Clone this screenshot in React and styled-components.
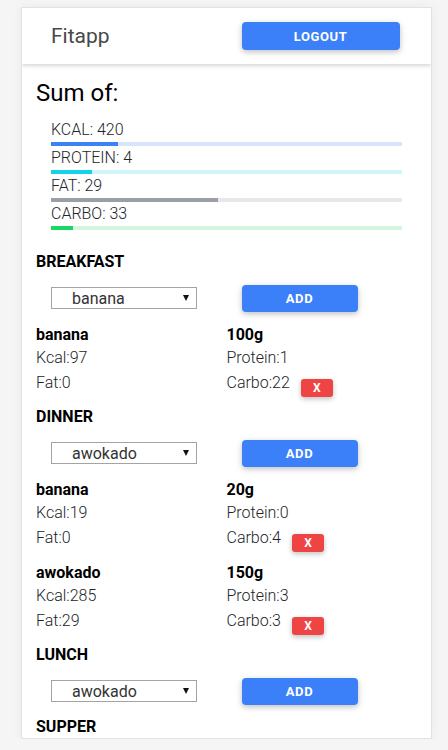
import React from "react";
import styled, { createGlobalStyle } from "styled-components";

const GlobalStyle = createGlobalStyle`
  body {
    margin: 0;
    background-color: #f5f5f5;
    font-family: Roboto, "Noto Sans", Arial, sans-serif;
  }
`;

const totals = [
  { label: "KCAL: 420", value: 19, fill: "#3b82f6", track: "#d7e6fd" },
  { label: "PROTEIN: 4", value: 11.8, fill: "#12d3ea", track: "#cff6fb" },
  { label: "FAT: 29", value: 47.6, fill: "#9a9ea6", track: "#e8e8e8" },
  { label: "CARBO: 33", value: 6.3, fill: "#17d862", track: "#d2f7de" },
];

const meals = [
  {
    name: "BREAKFAST",
    selected: "banana",
    items: [{ name: "banana", weight: "100g", kcal: 97, protein: 1, fat: 0, carbo: 22 }],
  },
  {
    name: "DINNER",
    selected: "awokado",
    items: [
      { name: "banana", weight: "20g", kcal: 19, protein: 0, fat: 0, carbo: 4 },
      { name: "awokado", weight: "150g", kcal: 285, protein: 3, fat: 29, carbo: 3 },
    ],
  },
  { name: "LUNCH", selected: "awokado", items: [] },
  { name: "SUPPER", selected: "awokado", items: [], hidden: true },
];

const App = () => {
  return (
    <>
      <GlobalStyle />
      <Card>
        <Header>
          <Brand>Fitapp</Brand>
          <HeaderCol>
            <BlueButton $width="158px" $height="28px">Logout</BlueButton>
          </HeaderCol>
        </Header>

        <Content>
          <SumTitle>Sum of:</SumTitle>
          <Totals>
            {totals.map((t) => (
              <div key={t.label}>
                <TotalLabel>{t.label}</TotalLabel>
                <Track $color={t.track}>
                  <Fill $color={t.fill} style={{ width: `${t.value}%` }} />
                </Track>
              </div>
            ))}
          </Totals>

          {meals.map((meal, i) => (
            <Meal key={meal.name}>
              <MealTitle $first={i === 0}>{meal.name}</MealTitle>
              {!meal.hidden && (
                <>
                  <AddRow>
                    <Cell>
                      <SelectWrap>
                        <Select defaultValue={meal.selected}>
                          <option value="banana">banana</option>
                          <option value="awokado">awokado</option>
                        </Select>
                      </SelectWrap>
                    </Cell>
                    <Cell>
                      <BlueButton $width="116px" $height="27px">Add</BlueButton>
                    </Cell>
                  </AddRow>
                  {meal.items.map((item) => (
                    <Item key={item.name + item.weight}>
                      <ItemTitle>{item.name}</ItemTitle>
                      <ItemTitle>{item.weight}</ItemTitle>
                      <ItemText>Kcal:{item.kcal}</ItemText>
                      <ItemText>Protein:{item.protein}</ItemText>
                      <ItemText>Fat:{item.fat}</ItemText>
                      <ItemText>
                        Carbo:{item.carbo}
                        <DeleteButton>X</DeleteButton>
                      </ItemText>
                    </Item>
                  ))}
                </>
              )}
            </Meal>
          ))}
        </Content>
      </Card>
    </>
  );
};

export default App;

const Card = styled.div`
  margin: 7px 0 0 21px;
  width: 411px;
  height: 732px;
  box-sizing: border-box;
  background-color: #fff;
  border: 1px solid #e2e2e2;
  box-shadow: 0 0 10px rgba(0, 0, 0, 0.05);
  overflow: hidden;
`;

const Header = styled.header`
  height: 56px;
  padding: 0 14px;
  display: grid;
  grid-template-columns: 1fr 1fr;
  align-items: center;
  box-shadow: 0 2px 4px rgba(0, 0, 0, 0.16);
  position: relative;
`;

const Brand = styled.div`
  padding: 0 15px;
  font-size: 21px;
  color: #484848;
  line-height: 1;
`;

const HeaderCol = styled.div`
  padding: 0 15px;
  display: flex;
`;

const BlueButton = styled.button`
  width: ${(p) => p.$width};
  height: ${(p) => p.$height};
  border: none;
  border-radius: 4px;
  background-color: #3b80f9;
  color: #fff;
  font-family: Roboto, Arial, sans-serif;
  font-weight: 700;
  font-size: 13px;
  letter-spacing: 0.6px;
  text-transform: uppercase;
  padding: 0;
  box-shadow: 0 2px 5px rgba(0, 0, 0, 0.16), 0 2px 8px rgba(0, 0, 0, 0.1);
  cursor: pointer;
`;

const Content = styled.main`
  padding: 0 14px;
`;

const SumTitle = styled.h2`
  margin: 15px 0 0;
  font-size: 24px;
  line-height: 29px;
  font-weight: 400;
  color: #000;
`;

const Totals = styled.div`
  padding: 10px 15px 0;
`;

const TotalLabel = styled.div`
  font-size: 16px;
  line-height: 24px;
  font-weight: 300;
  color: #212529;
`;

const Track = styled.div`
  height: 4px;
  background-color: ${(p) => p.$color};
`;

const Fill = styled.div`
  height: 100%;
  background-color: ${(p) => p.$color};
`;

const Meal = styled.section``;

const MealTitle = styled.h3`
  margin: ${(p) => (p.$first ? "22px" : "12.5px")} 0 0;
  font-size: 16px;
  line-height: 19px;
  font-weight: 700;
  color: #000;
`;

const AddRow = styled.div`
  margin-top: 13.5px;
  display: grid;
  grid-template-columns: 1fr 1fr;
  align-items: center;
`;

const Cell = styled.div`
  padding: 0 15px;
  display: flex;
`;

const SelectWrap = styled.span`
  position: relative;
  display: inline-block;

  &::after {
    content: "";
    position: absolute;
    right: 8px;
    top: 8px;
    border-left: 3px solid transparent;
    border-right: 3px solid transparent;
    border-top: 6px solid #111;
    pointer-events: none;
  }
`;

const Select = styled.select`
  appearance: none;
  width: 146px;
  height: 22px;
  box-sizing: border-box;
  border: 1px solid #a3a3a3;
  border-radius: 0;
  background-color: #fff;
  padding: 0 0 0 20px;
  font-family: Roboto, Arial, sans-serif;
  font-size: 16px;
  color: #333;
  outline: none;
`;

const Item = styled.div`
  margin-top: 12px;
  display: grid;
  grid-template-columns: 1fr 1fr;
  grid-template-rows: 21px 25px 25px;
`;

const ItemTitle = styled.div`
  font-size: 16px;
  line-height: 21px;
  font-weight: 700;
  color: #000;
`;

const ItemText = styled.div`
  font-size: 16px;
  line-height: 25px;
  height: 25px;
  font-weight: 300;
  color: #212529;
  white-space: nowrap;
`;

const DeleteButton = styled.button`
  display: inline-block;
  vertical-align: -4px;
  margin-left: 11px;
  width: 32px;
  height: 18px;
  padding: 0;
  border: none;
  border-radius: 3px;
  background-color: #ef4444;
  color: #fff;
  font-family: Roboto, Arial, sans-serif;
  font-size: 12px;
  line-height: 18px;
  font-weight: 700;
  box-shadow: 0 2px 5px rgba(0, 0, 0, 0.16), 0 2px 6px rgba(0, 0, 0, 0.1);
  cursor: pointer;
`;
